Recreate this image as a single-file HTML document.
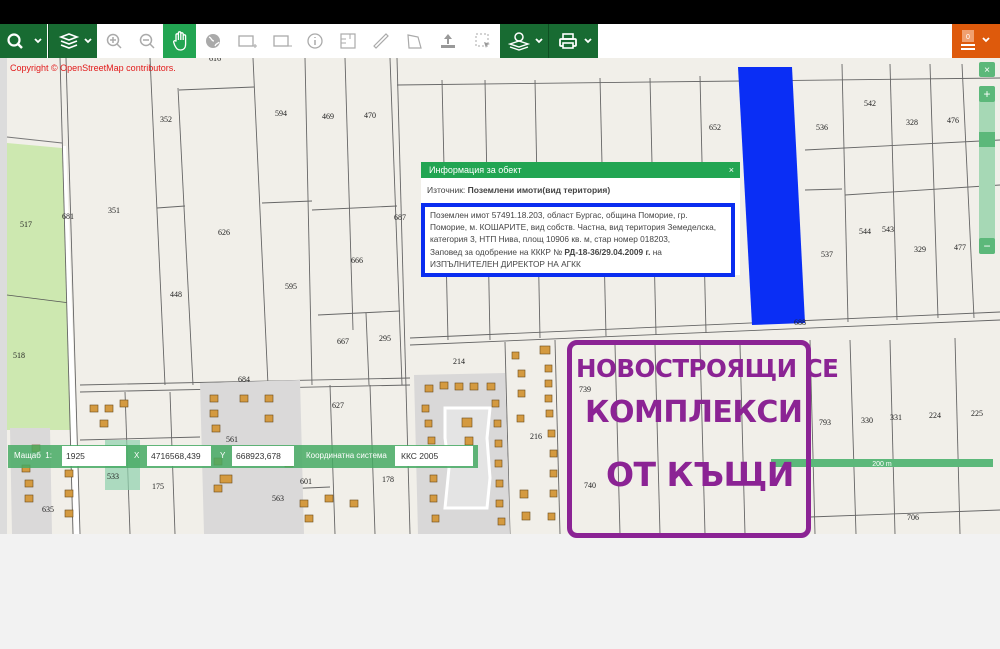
<!DOCTYPE html>
<html><head><meta charset="utf-8"><style>
body{margin:0;width:1000px;height:649px;overflow:hidden;background:#f2f2f2;font-family:"Liberation Sans","DejaVu Sans",sans-serif;position:relative}
.abs{position:absolute}
.top{left:0;top:0;width:1000px;height:24px;background:#000}
.tb{top:24px;height:34px;background:#fff;left:0;width:1000px}
.btn{position:absolute;top:24px;height:34px;display:flex;align-items:center;justify-content:center;color:#bbb;font-size:16px}
.g{background:#186b32;color:#fff}
.lbl{font-family:"Liberation Serif",serif;font-size:8px;fill:#222}
.pt{position:absolute;font-weight:bold;color:#8b2394;white-space:nowrap;font-family:"DejaVu Sans",sans-serif}
</style></head><body>
<div class="abs top"></div>
<div class="abs tb"></div>
<div class="btn g" style="left:0;width:47px"><svg width="40" height="20"><circle cx="10" cy="9" r="5.5" fill="none" stroke="#fff" stroke-width="2.2"/><line x1="14" y1="13" x2="18" y2="17" stroke="#fff" stroke-width="2.5"/><path d="M31 8l3 3 3-3" stroke="#fff" stroke-width="1.8" fill="none"/></svg></div>
<div class="btn g" style="left:48px;width:48px;border-left:1px solid #0e4f22"><svg width="40" height="20"><path d="M8 6l8-3 8 3-8 3z M8 10l8 3 8-3 M8 14l8 3 8-3" stroke="#fff" stroke-width="1.6" fill="none"/><path d="M32 8l3 3 3-3" stroke="#fff" stroke-width="1.8" fill="none"/></svg></div>
<div class="btn" style="left:97px;width:33px"><svg width="20" height="20"><circle cx="9" cy="9" r="5.5" fill="none" stroke="#aaa" stroke-width="1.5"/><path d="M6 9h6M9 6v6M13 13l4 4" stroke="#aaa" stroke-width="1.5"/></svg></div>
<div class="btn" style="left:130px;width:33px"><svg width="20" height="20"><circle cx="9" cy="9" r="5.5" fill="none" stroke="#aaa" stroke-width="1.5"/><path d="M6 9h6M13 13l4 4" stroke="#aaa" stroke-width="1.5"/></svg></div>
<div class="btn" style="left:163px;width:33px;background:#22a552"><svg width="20" height="22"><path d="M6 11V5a1.2 1.2 0 0 1 2.4 0v5V3a1.2 1.2 0 0 1 2.4 0v7V4a1.2 1.2 0 0 1 2.4 0v6V6a1.2 1.2 0 0 1 2.4 0v8c0 4-2 6-5 6s-4-1-6-5l-1-3a1.2 1.2 0 0 1 2-1z" fill="none" stroke="#fff" stroke-width="1.3"/></svg></div>
<div class="btn" style="left:196px;width:33px"><svg width="20" height="20"><circle cx="10" cy="10" r="7" fill="#aaa"/><path d="M6 6c3 1 2 4 5 4M12 15c1-3 3-2 4-4" stroke="#fff" stroke-width="1.3" fill="none"/></svg></div>
<div class="btn" style="left:229px;width:35px"><svg width="22" height="20"><rect x="3" y="5" width="14" height="10" fill="none" stroke="#aaa" stroke-width="1.3"/><path d="M17 15h4M19 13v4" stroke="#aaa"/></svg></div>
<div class="btn" style="left:264px;width:35px"><svg width="22" height="20"><rect x="3" y="5" width="14" height="10" fill="none" stroke="#aaa" stroke-width="1.3"/><path d="M17 15h4" stroke="#aaa"/></svg></div>
<div class="btn" style="left:299px;width:32px"><svg width="20" height="20"><circle cx="10" cy="10" r="7" fill="none" stroke="#aaa" stroke-width="1.3"/><path d="M10 9v5M10 6v1" stroke="#aaa" stroke-width="1.5"/></svg></div>
<div class="btn" style="left:331px;width:33px"><svg width="20" height="20"><rect x="3" y="3" width="14" height="14" fill="none" stroke="#aaa" stroke-width="1.2"/><path d="M3 8h5M3 12h5M12 3v5" stroke="#aaa"/></svg></div>
<div class="btn" style="left:364px;width:33px"><svg width="20" height="20"><path d="M3 15L15 3l2 2L5 17z" fill="none" stroke="#aaa" stroke-width="1.2"/></svg></div>
<div class="btn" style="left:397px;width:33px"><svg width="20" height="20"><path d="M4 4l10 2 3 11H5z" fill="none" stroke="#aaa" stroke-width="1.2"/></svg></div>
<div class="btn" style="left:430px;width:35px"><svg width="20" height="20"><path d="M10 3l-4 5h3v5h2V8h3z M3 14v3h14v-3" fill="#999"/></svg></div>
<div class="btn" style="left:465px;width:35px"><svg width="20" height="20"><rect x="3" y="3" width="12" height="12" fill="none" stroke="#aaa" stroke-dasharray="2 2"/><path d="M11 11l6 2-3 1-1 3z" fill="#999"/></svg></div>
<div class="btn g" style="left:500px;width:48px"><svg width="40" height="22"><circle cx="15" cy="7" r="4" fill="none" stroke="#fff" stroke-width="1.5"/><path d="M6 14l9-3 9 3-9 3z M6 17l9 3 9-3" stroke="#fff" stroke-width="1.4" fill="none"/><path d="M32 9l3 3 3-3" stroke="#fff" stroke-width="1.8" fill="none"/></svg></div>
<div class="btn g" style="left:548px;width:49px;border-left:1px solid #0e4f22"><svg width="40" height="20"><rect x="9" y="3" width="10" height="5" fill="none" stroke="#fff" stroke-width="1.6"/><rect x="6" y="8" width="16" height="7" rx="1" fill="none" stroke="#fff" stroke-width="1.8"/><rect x="9" y="12" width="10" height="5" fill="#186b32" stroke="#fff" stroke-width="1.6"/><path d="M31 8l3 3 3-3" stroke="#fff" stroke-width="1.8" fill="none"/></svg></div>
<div class="btn" style="left:952px;width:48px;background:#de5a0c"><svg width="40" height="26"><rect x="6" y="2" width="12" height="12" fill="#f0a070"/><text x="12" y="11" font-size="7" fill="#fff" text-anchor="middle">0</text><path d="M5 17h14M5 21h14" stroke="#fff" stroke-width="2"/><path d="M27 10l3 3 3-3" stroke="#fff" stroke-width="1.8" fill="none"/></svg></div>

<svg class="abs" style="left:0;top:58px" width="1000" height="476" viewBox="0 58 1000 476">
<rect x="0" y="58" width="1000" height="476" fill="#f1efe9"/>
<rect x="0" y="58" width="7" height="476" fill="#dcdcdc"/>
<polygon points="7,143 62,148 72,430 7,430" fill="#cde8b0"/>
<line x1="7" y1="137" x2="62" y2="143" stroke="#777"/>
<line x1="7" y1="295" x2="70" y2="303" stroke="#555" stroke-width=".8"/>
<polygon points="62,146 66,146 80,534 74,534" fill="#fff"/>
<g stroke="#666" stroke-width=".9" fill="none">
<line x1="60" y1="58" x2="73" y2="534"/><line x1="66" y1="58" x2="80" y2="534"/>
<line x1="150" y1="58" x2="165" y2="385"/><line x1="178" y1="88" x2="193" y2="385"/>
<line x1="253" y1="58" x2="268" y2="385"/><line x1="305" y1="58" x2="312" y2="385"/>
<line x1="345" y1="58" x2="353" y2="330"/><line x1="390" y1="58" x2="402" y2="385"/><line x1="397" y1="58" x2="410" y2="534"/>
<line x1="179" y1="90" x2="254" y2="87"/><line x1="157" y1="208" x2="185" y2="206"/>
<line x1="262" y1="203" x2="312" y2="201"/><line x1="312" y1="210" x2="397" y2="206"/>
<line x1="318" y1="315" x2="400" y2="311"/><line x1="366" y1="313" x2="369" y2="385"/>
<line x1="80" y1="385" x2="410" y2="378"/><line x1="80" y1="392" x2="410" y2="385"/>
<line x1="397" y1="85" x2="1000" y2="78"/>
<line x1="410" y1="338" x2="1000" y2="312"/><line x1="410" y1="345" x2="1000" y2="320"/>
<line x1="442" y1="80" x2="448" y2="340"/><line x1="485" y1="80" x2="490" y2="340"/><line x1="535" y1="80" x2="540" y2="338"/>
<line x1="600" y1="78" x2="606" y2="336"/><line x1="650" y1="78" x2="656" y2="335"/><line x1="700" y1="76" x2="706" y2="333"/>
<line x1="842" y1="64" x2="848" y2="322"/><line x1="890" y1="64" x2="897" y2="320"/><line x1="930" y1="64" x2="938" y2="318"/><line x1="962" y1="64" x2="974" y2="318"/>
<line x1="805" y1="150" x2="1000" y2="140"/><line x1="805" y1="190" x2="842" y2="189"/><line x1="845" y1="195" x2="1000" y2="185"/>
<line x1="615" y1="345" x2="620" y2="534"/><line x1="655" y1="345" x2="660" y2="534"/><line x1="700" y1="345" x2="705" y2="534"/><line x1="740" y1="345" x2="745" y2="534"/>
<line x1="810" y1="340" x2="815" y2="534"/><line x1="850" y1="340" x2="856" y2="534"/><line x1="890" y1="340" x2="895" y2="534"/><line x1="955" y1="338" x2="960" y2="534"/>
<line x1="810" y1="517" x2="1000" y2="510"/>
<line x1="125" y1="392" x2="130" y2="534"/><line x1="170" y1="392" x2="175" y2="534"/><line x1="330" y1="385" x2="335" y2="534"/><line x1="370" y1="385" x2="375" y2="534"/>
<line x1="260" y1="490" x2="330" y2="487"/><line x1="80" y1="440" x2="200" y2="437"/>
<line x1="505" y1="342" x2="510" y2="534"/><line x1="555" y1="340" x2="560" y2="534"/>
</g>
<rect x="105" y="440" width="35" height="50" fill="#8fd1ad" opacity=".7"/>
<polygon points="414,375 505,373 510,534 418,534" fill="#d9d8d8"/>
<path d="M445 408h45l-3 30 3 40-3 30h-42l4-40-4-30z" fill="#e4e4e4" stroke="#fff" stroke-width="3"/>
<polygon points="200,383 300,380 304,534 204,534" fill="#dad9d9"/>
<polygon points="10,428 50,428 52,534 12,534" fill="#dad9d9"/>
<polygon points="738,67 792,67 805,323 752,325" fill="#0a2ef5"/>
<g fill="#d49a40" stroke="#6a4a1a" stroke-width=".6">
<rect x="425" y="385" width="8" height="7"/><rect x="440" y="382" width="8" height="7"/><rect x="455" y="383" width="8" height="7"/><rect x="470" y="383" width="8" height="7"/><rect x="487" y="383" width="8" height="7"/>
<rect x="422" y="405" width="7" height="7"/><rect x="425" y="420" width="7" height="7"/><rect x="428" y="437" width="7" height="7"/><rect x="430" y="455" width="7" height="7"/><rect x="430" y="475" width="7" height="7"/><rect x="430" y="495" width="7" height="7"/><rect x="432" y="515" width="7" height="7"/>
<rect x="492" y="400" width="7" height="7"/><rect x="494" y="420" width="7" height="7"/><rect x="495" y="440" width="7" height="7"/><rect x="495" y="460" width="7" height="7"/><rect x="496" y="480" width="7" height="7"/><rect x="496" y="500" width="7" height="7"/><rect x="498" y="518" width="7" height="7"/>
<rect x="462" y="418" width="10" height="9"/><rect x="465" y="437" width="8" height="8"/>
<rect x="512" y="352" width="7" height="7"/><rect x="518" y="370" width="7" height="7"/><rect x="518" y="390" width="7" height="7"/><rect x="517" y="415" width="7" height="7"/>
<rect x="540" y="346" width="10" height="8"/><rect x="545" y="365" width="7" height="7"/><rect x="545" y="380" width="7" height="7"/><rect x="545" y="395" width="7" height="7"/><rect x="546" y="410" width="7" height="7"/><rect x="548" y="430" width="7" height="7"/><rect x="550" y="450" width="7" height="7"/><rect x="550" y="470" width="7" height="7"/><rect x="550" y="490" width="7" height="7"/><rect x="548" y="513" width="7" height="7"/><rect x="520" y="490" width="8" height="8"/><rect x="522" y="512" width="8" height="8"/>
<rect x="210" y="395" width="8" height="7"/><rect x="210" y="410" width="8" height="7"/><rect x="212" y="425" width="8" height="7"/><rect x="214" y="458" width="8" height="7"/><rect x="214" y="485" width="8" height="7"/><rect x="240" y="395" width="8" height="7"/><rect x="265" y="395" width="8" height="7"/><rect x="265" y="415" width="8" height="7"/><rect x="285" y="460" width="8" height="7"/><rect x="300" y="500" width="8" height="7"/><rect x="325" y="495" width="8" height="7"/><rect x="350" y="500" width="8" height="7"/><rect x="305" y="515" width="8" height="7"/><rect x="220" y="475" width="12" height="8"/>
<rect x="22" y="465" width="8" height="7"/><rect x="25" y="480" width="8" height="7"/><rect x="25" y="495" width="8" height="7"/><rect x="65" y="470" width="8" height="7"/><rect x="65" y="490" width="8" height="7"/><rect x="65" y="510" width="8" height="7"/><rect x="32" y="445" width="8" height="7"/><rect x="90" y="405" width="8" height="7"/><rect x="105" y="405" width="8" height="7"/><rect x="120" y="400" width="8" height="7"/><rect x="100" y="420" width="8" height="7"/>
</g>
<g class="lbl" text-anchor="middle">
<text x="215" y="61">616</text><text x="166" y="122">352</text><text x="281" y="116">594</text><text x="328" y="119">469</text><text x="370" y="118">470</text>
<text x="26" y="227">517</text><text x="68" y="219">681</text><text x="114" y="213">351</text><text x="224" y="235">626</text><text x="400" y="220">687</text><text x="357" y="263">666</text>
<text x="176" y="297">448</text><text x="291" y="289">595</text><text x="343" y="344">667</text><text x="385" y="341">295</text><text x="19" y="358">518</text>
<text x="715" y="130">652</text><text x="822" y="130">536</text><text x="870" y="106">542</text><text x="912" y="125">328</text><text x="953" y="123">476</text>
<text x="865" y="234">544</text><text x="888" y="232">543</text><text x="827" y="257">537</text><text x="920" y="252">329</text><text x="960" y="250">477</text><text x="800" y="325">688</text>
<text x="459" y="364">214</text><text x="244" y="382">684</text><text x="338" y="408">627</text><text x="536" y="439">216</text><text x="585" y="392">739</text>
<text x="825" y="425">793</text><text x="867" y="423">330</text><text x="896" y="420">331</text><text x="935" y="418">224</text><text x="977" y="416">225</text>
<text x="113" y="479">533</text><text x="158" y="489">175</text><text x="388" y="482">178</text><text x="306" y="484">601</text><text x="278" y="501">563</text><text x="590" y="488">740</text><text x="913" y="520">706</text><text x="48" y="512">635</text><text x="232" y="442">561</text>
</g>
<text x="10" y="71" font-size="9" fill="#e21a1a" font-family="Liberation Sans">Copyright © OpenStreetMap contributors.</text>
<rect x="771" y="459" width="222" height="8" fill="#5cb87a"/>
<text x="882" y="466" font-size="7" fill="#fff" text-anchor="middle" font-family="Liberation Sans">200 m</text>
<rect x="979" y="62" width="16" height="15" rx="2" fill="#5cb87a"/><text x="987" y="73" font-size="10" fill="#fff" text-anchor="middle">×</text>
<rect x="979" y="86" width="16" height="168" rx="2" fill="#a6d8b5"/>
<rect x="979" y="86" width="16" height="16" rx="2" fill="#5cb87a"/><text x="987" y="98" font-size="12" fill="#fff" text-anchor="middle">+</text>
<rect x="979" y="132" width="16" height="15" fill="#5cb87a"/>
<rect x="979" y="238" width="16" height="16" rx="2" fill="#5cb87a"/><text x="987" y="250" font-size="12" fill="#fff" text-anchor="middle">−</text>
</svg>

<div class="abs" style="left:421px;top:162px;width:319px;height:113px;background:#fff">
<div style="height:16px;background:#22a552;color:#fff;font-size:9px;line-height:16px;padding-left:8px">Информация за обект<span style="float:right;margin-right:6px">×</span></div>
<div style="font-size:8.5px;color:#444;padding:7px 0 0 6px">Източник: <b>Поземлени имоти(вид територия)</b></div>
</div>
<div class="abs" style="left:421px;top:203px;width:301px;height:64px;border:4px solid #0a2df0;background:#fff;font-size:8.3px;line-height:12.2px;color:#444;padding:2px 0 0 5px;white-space:nowrap;overflow:hidden">Поземлен имот 57491.18.203, област Бургас, община Поморие, гр.<br>Поморие, м. КОШАРИТЕ, вид собств. Частна, вид територия Земеделска,<br>категория 3, НТП Нива, площ 10906 кв. м, стар номер 018203,<br>Заповед за одобрение на КККР № <b>РД-18-36/29.04.2009 г.</b> на<br>ИЗПЪЛНИТЕЛЕН ДИРЕКТОР НА АГКК</div>

<div class="abs" style="left:8px;top:445px;width:470px;height:23px;background:rgba(70,170,100,.85)"></div>
<div class="abs" style="left:14px;top:451px;font-size:8px;color:#fff">Мащаб&nbsp; 1:</div>
<div class="abs" style="left:62px;top:446px;width:60px;height:20px;background:#fff;font-size:8.5px;line-height:20px;padding-left:4px;color:#333">1925</div>
<div class="abs" style="left:134px;top:451px;font-size:8px;color:#fff">X</div>
<div class="abs" style="left:147px;top:446px;width:60px;height:20px;background:#fff;font-size:8.5px;line-height:20px;padding-left:4px;color:#333">4716568,439</div>
<div class="abs" style="left:220px;top:451px;font-size:8px;color:#fff">Y</div>
<div class="abs" style="left:232px;top:446px;width:58px;height:20px;background:#fff;font-size:8.5px;line-height:20px;padding-left:4px;color:#333">668923,678</div>
<div class="abs" style="left:306px;top:451px;font-size:8px;color:#fff">Координатна система</div>
<div class="abs" style="left:395px;top:446px;width:72px;height:20px;background:#fff;font-size:8.5px;line-height:20px;padding-left:6px;color:#333">ККС 2005</div>

<div class="abs" style="left:567px;top:340px;width:234px;height:188px;border:5px solid #8b2394;border-radius:10px"></div>
<div class="pt" style="left:576px;top:354px;font-size:24.5px;letter-spacing:-0.5px">НОВОСТРОЯЩИ СЕ</div>
<div class="pt" style="left:585px;top:395px;font-size:30px;letter-spacing:-0.5px">КОМПЛЕКСИ</div>
<div class="pt" style="left:606px;top:455px;font-size:33px;letter-spacing:-0.5px">ОТ КЪЩИ</div>
</body></html>
